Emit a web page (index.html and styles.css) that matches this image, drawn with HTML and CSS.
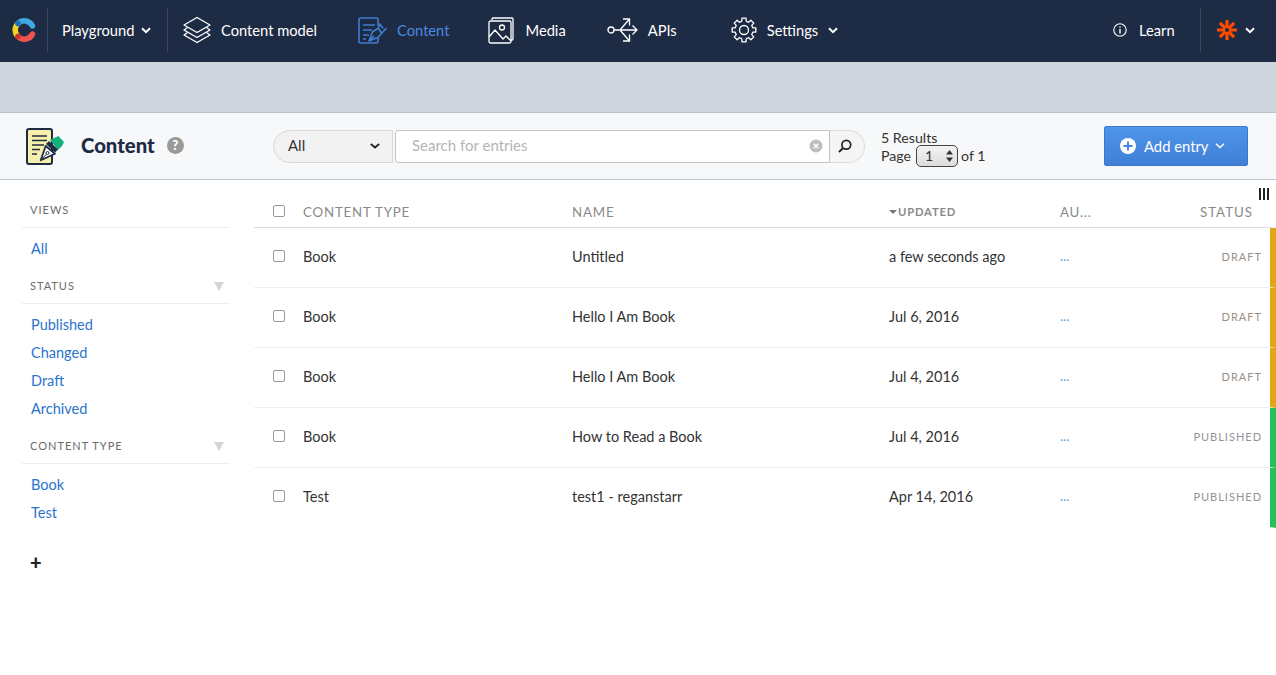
FILE: index.html
```html
<!DOCTYPE html>
<html>
<head>
    <title>Content</title>
    <link rel="stylesheet" href="styles.css">
</head>
<body>
    <nav class="topnav">
        <a class="logo">
            <svg width="24" height="26" viewBox="0 0 24 26" fill="none" stroke-width="5.500" stroke-linecap="round">
                <path d="M6 6.500A9 9 0 0 0 6 19.500" stroke="#f4d21f"/>
                <path d="M6 6.500A9 9 0 0 1 20.500 9" stroke="#3fa9e0"/>
                <path d="M6 19.500A9 9 0 0 0 20.500 17" stroke="#ef5350"/>
                <circle cx="6" cy="6.500" r="2.700" fill="#1b6fb5"/>
                <circle cx="6" cy="19.500" r="2.700" fill="#c4342f"/>
            </svg>
        </a>
        <a class="nav-item space-playground">Playground <svg class="chev" width="10" height="7" viewBox="0 0 10 7"><path d="M1 1.200l4 4 4-4" fill="none" stroke="#fff" stroke-width="2"/></svg></a>
        <a class="nav-item item-model">
            <svg width="28" height="28" viewBox="0 0 28 28" fill="none" stroke="#fff" stroke-width="1.300" stroke-linejoin="round"><path d="M14 1.500L27 9 14 16.500 1 9z"/><path d="M4.500 11.500L1 14l13 7.500L27 14l-3.500-2.500"/><path d="M4.500 16.500L1 19l13 7.500L27 19l-3.500-2.500"/></svg>
            Content model
        </a>
        <a class="nav-item item-content active">
            <svg width="29" height="27" viewBox="0 0 29 27" fill="none" stroke="#3f7ed0" stroke-width="1.600" stroke-linejoin="round"><path d="M20 21v3.500a1.500 1.500 0 0 1-1.500 1.500h-16A1.500 1.500 0 0 1 1 24.500v-22A1.500 1.500 0 0 1 2.500 1h16A1.500 1.500 0 0 1 20 2.500V9"/><path d="M5 8h12M5 13h9M5 18h6M5 22h3"/><path d="M11 24l3.600-9.300 5.700-3.400 3.400 5-3.400 4z"/><path d="M11 24l5-5M20.300 11.300L22 7l3 4.500M23.700 16.300L28.500 11"/></svg>
            Content
        </a>
        <a class="nav-item item-media">
            <svg width="26" height="27" viewBox="0 0 26 27" fill="none" stroke="#fff" stroke-width="1.300" stroke-linejoin="round"><path d="M4 3V2a1 1 0 0 1 1-1h19a1 1 0 0 1 1 1v20a1 1 0 0 1-1 1h-1"/><rect x="1" y="4" width="22" height="22" rx="1.500"/><circle cx="14" cy="10.500" r="2.500"/><path d="M1 20l6-7 8 9 3-3 5 5"/></svg>
            Media
        </a>
        <a class="nav-item item-apis">
            <svg width="31" height="26" viewBox="0 0 31 26" fill="none" stroke="#fff" stroke-width="1.300"><circle cx="4" cy="13" r="3"/><path d="M7 13h23M25.500 8.500L30 13l-4.500 4.500M13 13l9-10.500M16 2h6.500v6.500M13 13l9 10.500M16 24h6.500v-6.500"/></svg>
            APIs
        </a>
        <a class="nav-item item-settings">
            <svg width="26" height="26" viewBox="0 0 26 26" fill="none" stroke="#fff" stroke-width="1.300" stroke-linejoin="round"><circle cx="13" cy="13" r="4.500"/><path d="M10.920 1.180H15.080L15.180 4.270 17.640 5.290 19.880 3.170 22.830 6.120 20.710 8.360 21.730 10.820 24.820 10.920V15.080L21.730 15.180 20.710 17.640 22.830 19.880 19.880 22.830 17.640 20.710 15.180 21.730 15.080 24.820H10.920L10.820 21.730 8.360 20.710 6.120 22.830 3.170 19.880 5.290 17.640 4.270 15.180 1.180 15.080V10.920L4.270 10.820 5.290 8.360 3.170 6.120 6.120 3.170 8.360 5.290 10.820 4.270z"/></svg>
            Settings <svg class="chev" width="10" height="7" viewBox="0 0 10 7"><path d="M1 1.200l4 4 4-4" fill="none" stroke="#fff" stroke-width="2"/></svg>
        </a>
        <a class="nav-item item-learn">
            <svg width="14" height="14" viewBox="0 0 14 14" fill="none" stroke="#fff" stroke-width="1.100"><circle cx="7" cy="7" r="6.200"/><path d="M7 6v4.500M7 3.500v1.300" stroke-width="1.400"/></svg>
            Learn
        </a>
        <a class="nav-item item-account">
            <svg width="20" height="20" viewBox="0 0 20 20" stroke="#ff4a00" stroke-width="3.200"><path d="M10 0v20M0 10h20M2.900 2.900l14.200 14.200M17.100 2.900L2.900 17.100"/><circle cx="10" cy="10" r="2" fill="#1e2b45" stroke="none"/></svg>
            <svg class="chev" width="10" height="7" viewBox="0 0 10 7"><path d="M1 1.200l4 4 4-4" fill="none" stroke="#fff" stroke-width="2"/></svg>
        </a>
    </nav>

    <div class="band"></div>

    <header class="page-head">
        <div class="page-title">
            <svg width="40" height="37" viewBox="0 0 40 37">
                <rect x="2" y="1" width="25" height="35" rx="2" fill="#f6eeaa" stroke="#1e2b45" stroke-width="2"/>
                <path d="M7 8h15M7 12.500h15M7 17h12M7 21.500h8M7 26h5" stroke="#1e2b45" stroke-width="1.500"/>
                <path d="M25 12l8.300-4 5.700 6-2 4-4 4z" fill="#14b07c"/>
                <path d="M15.700 32.300L20.700 18 30 25.700z" fill="#fff" stroke="#1e2b45" stroke-width="1.800" stroke-linejoin="round"/>
                <path d="M15.700 32.300l6-6.300" stroke="#1e2b45" stroke-width="1"/>
                <circle cx="22.500" cy="25" r="1.500" fill="none" stroke="#1e2b45"/>
                <path d="M21 16l3-3 9 8.500-3 3z" fill="#1e2b45"/>
            </svg>
            <h1>Content</h1>
            <span class="help">?</span>
        </div>
        <div class="search">
            <div class="search-type"><span>All</span> <svg width="10" height="6" viewBox="0 0 10 6"><path d="M.8 1l4.200 3.500L9.200 1" fill="none" stroke="#222" stroke-width="1.800"/></svg></div>
            <div class="search-box">
                <span>Search for entries</span>
                <svg width="14" height="14" viewBox="0 0 14 14"><circle cx="7" cy="7" r="6.500" fill="#bdbdbd"/><path d="M4.700 4.700l4.600 4.600M9.300 4.700l-4.600 4.600" stroke="#fff" stroke-width="1.500"/></svg>
            </div>
            <button class="search-go"><svg width="14" height="14" viewBox="0 0 14 14" fill="none" stroke="#222" stroke-width="1.700"><circle cx="8.300" cy="5.700" r="4.400"/><path d="M5 9l-4 4" stroke-width="2"/></svg></button>
        </div>
        <div class="results">
            <div>5 Results</div>
            <div class="pager">Page <span class="page-select">1 <svg width="7" height="12" viewBox="0 0 7 12" fill="#333"><path d="M3.500 0L7 4.500H0zM3.500 12L0 7.500h7z"/></svg></span> of 1</div>
        </div>
        <button class="add-entry">
            <svg width="16" height="16" viewBox="0 0 16 16"><circle cx="8" cy="8" r="8" fill="#fff"/><path d="M8 3.500v9M3.500 8h9" stroke="#4586de" stroke-width="2"/></svg>
            Add entry
            <svg class="add-chev" width="10" height="6" viewBox="0 0 10 6"><path d="M1 .8l4 3.700 4-3.700" fill="none" stroke="#fff" stroke-width="1.500"/></svg>
        </button>
    </header>

    <div class="main">
        <aside class="sidebar">
            <h4 class="first">Views</h4>
            <a>All</a>
            <h4>Status <i class="tri"></i></h4>
            <a>Published</a>
            <a>Changed</a>
            <a>Draft</a>
            <a>Archived</a>
            <h4>Content Type <i class="tri"></i></h4>
            <a>Book</a>
            <a>Test</a>
            <div class="plus">+</div>
        </aside>
        <section class="entries">
            <div class="col-toggle"><i></i><i></i><i></i></div>
            <div class="row head">
                <span><input type="checkbox"></span>
                <span>Content Type</span>
                <span>Name</span>
                <span class="updated"><i class="sort"></i>Updated</span>
                <span>Au...</span>
                <span class="st">Status</span>
            </div>
            <div class="row draft">
                <span><input type="checkbox"></span><span>Book</span><span>Untitled</span><span>a few seconds ago</span><span class="dots">...</span><span class="st">Draft</span>
            </div>
            <div class="row draft">
                <span><input type="checkbox"></span><span>Book</span><span>Hello I Am Book</span><span>Jul 6, 2016</span><span class="dots">...</span><span class="st">Draft</span>
            </div>
            <div class="row draft">
                <span><input type="checkbox"></span><span>Book</span><span>Hello I Am Book</span><span>Jul 4, 2016</span><span class="dots">...</span><span class="st">Draft</span>
            </div>
            <div class="row published">
                <span><input type="checkbox"></span><span>Book</span><span>How to Read a Book</span><span>Jul 4, 2016</span><span class="dots">...</span><span class="st">Published</span>
            </div>
            <div class="row published last">
                <span><input type="checkbox"></span><span>Test</span><span>test1 - reganstarr</span><span>Apr 14, 2016</span><span class="dots">...</span><span class="st">Published</span>
            </div>
        </section>
    </div>
</body>
</html>
```

FILE: styles.css
```css
* { box-sizing: border-box; }
html, body { height: 100%; }
body { margin: 0; overflow: hidden; background: #fff; color: #333; font-family: 'Lato', 'Liberation Sans', sans-serif; font-size: 14px; }

.topnav { display: flex; align-items: center; height: 62px; padding-bottom: 2px; background: #1e2b45; color: #fff; }
.logo { display: flex; align-items: center; width: 48px; height: 44px; padding-left: 12px; border-right: 1px solid #3a465e; }
.nav-item { display: flex; align-items: center; gap: 10px; font-size: 14.700px; white-space: nowrap; }
.nav-item .chev { flex: none; }
.space-playground { width: 120px; height: 44px; padding-left: 14px; gap: 7px; border-right: 1px solid #3a465e; }
.item-model { margin-left: 15px; }
.item-content { margin-left: 41px; }
.active { color: #4a8ae0; }
.item-media { margin-left: 39px; gap: 11px; }
.item-apis { margin-left: 41px; }
.item-settings { margin-left: 54px; }
.item-learn { margin-left: auto; gap: 12px; width: 88px; height: 44px; border-right: 1px solid #3a465e; }
.item-account { width: 75px; padding-left: 16px; gap: 8px; }

.band { height: 51px; background: #ced5dd; border-bottom: 1px solid #b9c3cd; }

.page-head { display: flex; align-items: center; height: 67px; background: #f7f8fa; border-bottom: 1px solid #bcc5cf; }
.page-title { display: flex; align-items: center; width: 273px; padding-left: 25px; padding-bottom: 2px; }
.page-title svg { margin-top: 2px; }
.page-title h1 { margin: 0 12px 0 16px; font-size: 20.300px; font-weight: 900; color: #1e2b45; }
.help { display: block; width: 17px; height: 17px; border-radius: 50%; background: #999; color: #fff; font-size: 13px; font-weight: 900; line-height: 17px; text-align: center; }

.search { display: flex; height: 33px; }
.search-type { display: flex; align-items: center; justify-content: space-between; width: 120px; padding: 0 12px 0 14px; background: #f2f2f2; border: 1px solid #d8d8d8; border-radius: 17px 0 0 17px; color: #333; font-size: 15px; }
.search-box { display: flex; align-items: center; justify-content: space-between; width: 435px; margin-left: 2px; padding: 0 6px 0 16px; background: #fff; border: 1px solid #c4c4c4; border-radius: 3px 0 0 3px; color: #b5b5b5; font-size: 15px; }
.search-type span, .search-box span { margin-bottom: 2px; }
.search-go { display: flex; align-items: center; justify-content: center; width: 35px; padding: 0 4px 0 0; background: #f5f5f5; border: 1px solid #dcdcdc; border-left: 0; border-radius: 0 17px 17px 0; }

.results { width: 223px; margin-left: 16px; padding-top: 2px; color: #333; font-size: 14.200px; line-height: 18px; }
.pager { display: flex; align-items: center; gap: 4px; height: 18px; }
.page-select { display: flex; align-items: center; justify-content: space-between; width: 42px; height: 22px; margin: 0 -1px 0 1px; padding: 0 4px 0 8px; background: linear-gradient(#f4f4f4, #dcdcdc); border: 1px solid #444; border-radius: 5px; }

.add-entry { display: flex; align-items: center; gap: 8px; width: 144px; height: 40px; padding: 0 15px; background: linear-gradient(#4f95ea, #407fd8); border: 1px solid #3b78cc; border-radius: 2px; color: #fff; font-family: inherit; font-size: 14.800px; }
.add-chev { margin-left: -2px; }

.main { display: flex; }
.sidebar { width: 254px; padding: 0 24px 0 22px; }
.sidebar h4 { position: relative; height: 34px; margin: 7px 0; padding: 9px 0 0 8px; border-bottom: 1px solid #eee; color: #6b6b6b; font-size: 11px; font-weight: 400; letter-spacing: 1px; text-transform: uppercase; }
.sidebar h4.first { margin-top: 11px; height: 37px; padding-top: 12px; }
.sidebar a { display: block; height: 28px; padding-left: 9px; color: #2a74cc; font-size: 14.500px; line-height: 28px; }
.tri { position: absolute; right: 6px; top: 12px; border-top: 9px solid #d4d4d4; border-left: 5px solid transparent; border-right: 5px solid transparent; }
.plus { margin-top: 25px; padding-left: 8px; color: #222; font-size: 20px; font-weight: 900; line-height: 20px; }

.entries { position: relative; flex: 1; }
.col-toggle { position: absolute; top: 8px; right: 7px; display: flex; gap: 2px; }
.col-toggle i { width: 2px; height: 12px; background: #222; }
.row { display: grid; grid-template-columns: 30px 269px 317px 171px 1fr 92px; align-items: center; height: 60px; padding: 0 8px 3px 19px; border-bottom: 1px solid #f0f0f0; border-right: 6px solid transparent; color: #333; font-size: 14.500px; }
.row.last { border-bottom-color: transparent; }
.row input { display: block; width: 12px; height: 12px; margin: 0; appearance: none; background: #fff; border: 1px solid #999; border-radius: 2px; }
.row.head { height: 48px; padding: 16px 17px 0 19px; border-bottom: 1px solid #dcdcdc; color: #8a8a8a; font-size: 13.300px; letter-spacing: .8px; text-transform: uppercase; }
.row.head input { margin-top: -2px; }
.updated { display: flex; align-items: center; gap: 1px; font-weight: 700; }
.row.head .updated { font-size: 11.300px; }
.sort { border-top: 4px solid #777; border-left: 4px solid transparent; border-right: 4px solid transparent; }
.dots { color: #5a9fe0; font-size: 13px; }
.st { text-align: right; }
.row .st { color: #9a8f85; font-size: 11px; letter-spacing: 1px; text-transform: uppercase; }
.row.head .st { color: #8a8a8a; font-size: 13.300px; }
.row.published .st { color: #8f9499; }
.draft { border-right-color: #e2a516; }
.published { border-right-color: #28c05f; }
```
